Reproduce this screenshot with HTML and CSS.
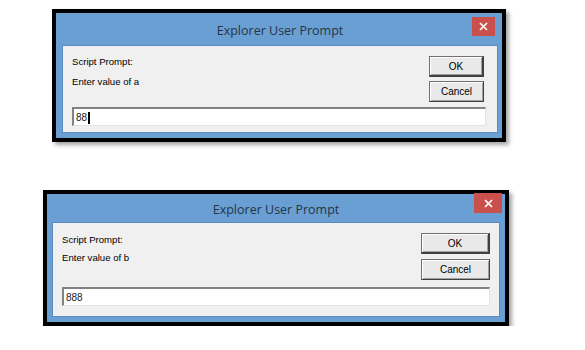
FILE: index.html
```html
<!DOCTYPE html>
<html lang="en">
<head>
    <meta charset="UTF-8">
    <meta name="viewport" content="width=device-width, initial-scale=1.0">
    <title>Explorer User Prompt</title>
    <link rel="stylesheet" href="styles.css">
</head>
<body>
    <div class="page">
        <div class="dialog dialog-a">
            <div class="titlebar">
                <span></span>
                <span class="title">Explorer User Prompt</span>
                <button class="close"><svg width="9" height="9" viewBox="0 0 9 9"><path d="M1 1L8 8M8 1L1 8" stroke="#fff" stroke-width="1.7"/></svg></button>
            </div>
            <div class="content">
                <div class="msg">
                    <p>Script Prompt:</p>
                    <p class="line2">Enter value of a</p>
                </div>
                <div class="btns">
                    <button class="btn default">OK</button>
                    <button class="btn">Cancel</button>
                </div>
                <div class="field">88<span class="caret"></span></div>
            </div>
        </div>

        <div class="dialog dialog-b">
            <div class="titlebar">
                <span></span>
                <span class="title">Explorer User Prompt</span>
                <button class="close"><svg width="9" height="9" viewBox="0 0 9 9"><path d="M1 1L8 8M8 1L1 8" stroke="#fff" stroke-width="1.7"/></svg></button>
            </div>
            <div class="content">
                <div class="msg">
                    <p>Script Prompt:</p>
                    <p class="line2">Enter value of b</p>
                </div>
                <div class="btns">
                    <button class="btn default">OK</button>
                    <button class="btn">Cancel</button>
                </div>
                <div class="field">888</div>
            </div>
        </div>
    </div>
</body>
</html>
```

FILE: styles.css
```css
*{
    margin: 0;
    padding: 0;
    box-sizing: border-box;
}
body{
    background-color: #fff;
    font-family: 'Liberation Sans', Arial, sans-serif;
}
.page{
    display: flex;
    flex-direction: column;
    align-items: flex-start;
}

/* window frame */
.dialog{
    border: 4px solid #000;
    background-color: #6a9fd4;
    box-shadow: 3px 3px 4px rgba(0, 0, 0, 0.35);
}
.dialog-a{
    width: 454px;
    margin: 9px 0 0 52px;
    padding: 0 4px 5px 6px;
}
.dialog-b{
    width: 466px;
    margin: 48px 0 0 43px;
    padding: 0 5px 5px 5px;
}

.titlebar{
    display: grid;
    grid-template-columns: 1fr auto 1fr;
    align-items: center;
    height: 32px;
}
.dialog-b .titlebar{
    height: 28px;
}
.title{
    font-family: 'Open Sans', sans-serif;
    font-size: 12.5px;
    color: #263545;
    padding-top: 3px;
}
.close{
    justify-self: end;
    align-self: start;
    width: 23px;
    height: 19px;
    margin: 4px 3px 0 0;
    border: none;
    background-color: #c9504d;
    display: flex;
    align-items: center;
    justify-content: center;
}
.dialog-b .close{
    width: 28px;
    height: 20px;
    margin: -1px -2px 0 0;
}

/* client area */
.content{
    background-color: #f0f0f0;
    border: 1px solid #5b8bbf;
    display: grid;
    grid-template-columns: 1fr auto;
    padding: 10px 11px 6px 9px;
    font-size: 9.6px;
    color: #000;
}
.dialog-b .content{
    padding: 10px 9px 10px 9px;
}
.msg p{
    line-height: 12px;
}
.msg .line2{
    margin-top: 8px;
}
.dialog-b .msg{
    padding-top: 1px;
}
.dialog-b .msg .line2{
    margin-top: 6px;
}

.btns{
    display: flex;
    flex-direction: column;
    gap: 4px;
    margin-right: 2px;
}
.dialog-b .btns{
    gap: 5px;
    margin-right: 0;
}
.btn{
    width: 55px;
    height: 21px;
    font-family: 'Liberation Sans', Arial, sans-serif;
    font-size: 10px;
    color: #000;
    background-color: #e9e9e9;
    border: 1px solid #707070;
    border-right-color: #404040;
    border-bottom-color: #404040;
    box-shadow: inset 1px 1px #fff, inset -1px -1px #a0a0a0;
}
.btn.default{
    border-width: 1px 2px 2px 1px;
}
.dialog-b .btn{
    width: 69px;
}

.field{
    grid-column: 1 / 3;
    height: 19px;
    margin-top: 5px;
    padding: 3px 2px 0 2px;
    background-color: #fff;
    border: 1px solid #e3e3e3;
    border-top: 2px solid #828282;
    border-left: 2px solid #828282;
    font-size: 10px;
    line-height: 12px;
    color: #222;
    display: flex;
    align-items: flex-start;
}
.dialog-b .field{
    margin-top: 7px;
}
.caret{
    display: inline-block;
    width: 2px;
    height: 12px;
    margin-left: 1px;
    background-color: #000;
}
```
